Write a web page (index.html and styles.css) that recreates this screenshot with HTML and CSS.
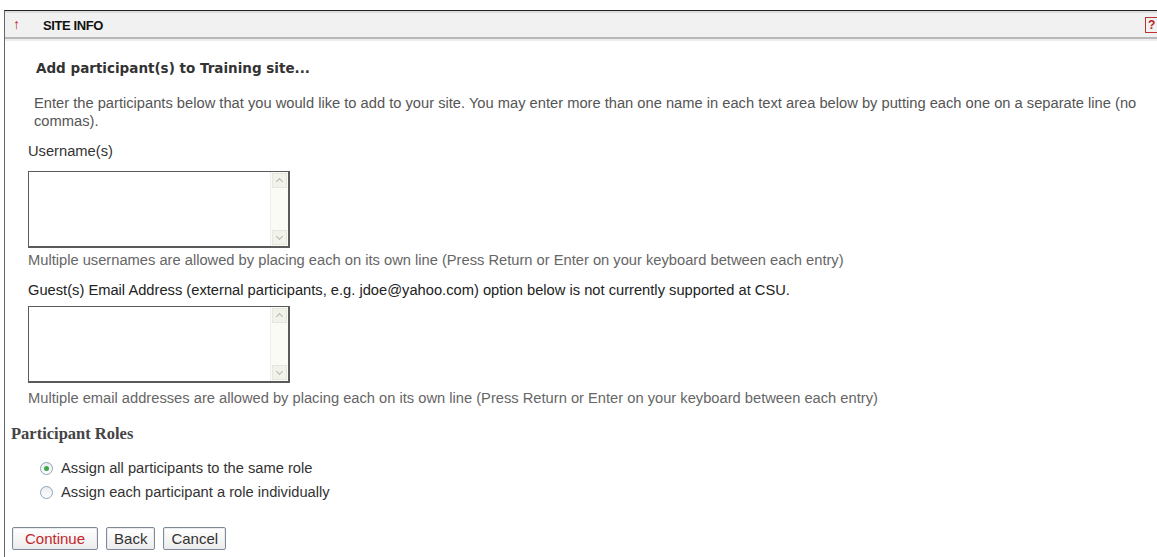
FILE: index.html
```html
<!DOCTYPE html>
<html lang="en">
<head>
<meta charset="utf-8">
<title>Site Info</title>
<link rel="stylesheet" href="styles.css">
</head>
<body>
<div class="portlet">
  <div class="portlet-title">
    <span class="reset-arrow">&#8593;</span>
    <h2>SITE INFO</h2>
    <span class="help-icon">?</span>
  </div>
  <div class="portlet-body">
    <h3 class="page-title">Add participant(s) to Training site...</h3>
    <p class="instruction">Enter the participants below that you would like to add to your site. You may enter more than one name in each text area below by putting each one on a separate line (no commas).</p>

    <div class="field">
      <label class="field-label" for="usernames">Username(s)</label>
      <div class="textbox">
        <textarea id="usernames"></textarea>
        <span class="scroller"><span class="arrow up"></span><span class="arrow down"></span></span>
      </div>
      <div class="field-help">Multiple usernames are allowed by placing each on its own line (Press Return or Enter on your keyboard between each entry)</div>
    </div>

    <div class="field second">
      <label class="field-label dark" for="emails">Guest(s) Email Address (external participants, e.g. jdoe@yahoo.com) option below is not currently supported at CSU.</label>
      <div class="textbox">
        <textarea id="emails"></textarea>
        <span class="scroller"><span class="arrow up"></span><span class="arrow down"></span></span>
      </div>
      <div class="field-help">Multiple email addresses are allowed by placing each on its own line (Press Return or Enter on your keyboard between each entry)</div>
    </div>
  </div>

  <h4 class="roles-title">Participant Roles</h4>
  <div class="roles">
    <label class="role"><span class="radio checked"></span>Assign all participants to the same role</label>
    <label class="role"><span class="radio"></span>Assign each participant a role individually</label>
  </div>

  <div class="actions">
    <button class="btn primary" type="button">Continue</button>
    <button class="btn" type="button">Back</button>
    <button class="btn" type="button">Cancel</button>
  </div>
</div>
</body>
</html>
```

FILE: styles.css
```css
html, body {
  margin: 0;
  padding: 0;
  background: #fff;
}

body {
  padding: 10px 0 0 4px;
  font-family: "Liberation Sans", Arial, sans-serif;
  font-size: 14.7px;
  color: #555;
}

.portlet {
  border-top: 1px solid #222;
  border-left: 1px solid #666;
  min-height: 546px;
}

/* title bar */
.portlet-title {
  display: flex;
  align-items: center;
  height: 24px;
  background: #f1f1f1;
  border-top: 2px solid #dcdcdc;
  border-bottom: 2px solid #b8b8b8;
  box-shadow: 0 2px 0 #ededed;
}

.reset-arrow {
  width: 27px;
  padding-left: 8px;
  color: #c41a1a;
  font-weight: bold;
  font-size: 14px;
  line-height: 1;
  margin-top: -3px;
}

.portlet-title h2 {
  flex: 1;
  margin: 0 0 0 3px;
  font-size: 13px;
  font-weight: bold;
  letter-spacing: -0.4px;
  color: #111;
}

.help-icon {
  width: 9px;
  height: 14px;
  border: 1px solid #b33;
  border-right: none;
  color: #b22;
  font-size: 12px;
  font-weight: bold;
  line-height: 14px;
  padding-left: 2px;
  overflow: hidden;
}

/* form body */
.portlet-body {
  padding: 0 0 0 23px;
}

.page-title {
  margin: 21px 0 0 8px;
  font-family: "DejaVu Sans", Verdana, sans-serif;
  font-size: 13.5px;
  font-weight: bold;
  color: #333;
  line-height: 17px;
}

.instruction {
  margin: 17px 0 0 6px;
  line-height: 18px;
  color: #555;
}

.field {
  margin-top: 12px;
}

.field.second {
  margin-top: 12px;
}

.field-label {
  display: block;
  color: #333;
  line-height: 18px;
}

.field-label.dark {
  color: #222;
}

.textbox {
  position: relative;
  width: 262px;
  height: 77px;
  margin-top: 11px;
}

.field.second .textbox {
  margin-top: 7px;
}

.textbox textarea {
  display: block;
  box-sizing: border-box;
  width: 100%;
  height: 100%;
  margin: 0;
  padding: 2px;
  border: 1px solid #5a5a5a;
  border-right-width: 2px;
  border-bottom-width: 2px;
  resize: none;
  background: #fff;
  font: inherit;
  outline: none;
}

.scroller {
  position: absolute;
  top: 1px;
  right: 2px;
  bottom: 2px;
  width: 17px;
  background: #fbfbf6;
  border-left: 1px solid #f0f0e8;
  pointer-events: none;
}

.arrow {
  position: absolute;
  left: 1px;
  width: 15px;
  height: 15px;
  background: #f1f2ea;
  border: 1px solid #e6e6de;
  box-sizing: border-box;
}

.arrow.up { top: 1px; }
.arrow.down { bottom: 1px; }

.arrow::after {
  content: "";
  position: absolute;
  left: 4px;
  width: 4px;
  height: 4px;
  border-left: 1px solid #b5b8ad;
  border-top: 1px solid #b5b8ad;
}

.arrow.up::after {
  top: 5px;
  transform: rotate(45deg);
}

.arrow.down::after {
  top: 3px;
  transform: rotate(-135deg);
}

.field-help {
  margin-top: 3px;
  color: #666;
  line-height: 18px;
}

.field.second .field-help {
  margin-top: 6px;
}

/* roles */
.roles-title {
  margin: 18px 0 0 6px;
  font-family: "Liberation Serif", "Times New Roman", serif;
  font-size: 16.5px;
  font-weight: bold;
  color: #444;
  line-height: 18px;
}

.roles {
  margin: 16px 0 0 35px;
  display: flex;
  flex-direction: column;
  gap: 6px;
}

.role {
  display: flex;
  align-items: center;
  color: #333;
  line-height: 18px;
}

.radio {
  position: relative;
  box-sizing: border-box;
  width: 13px;
  height: 13px;
  margin-right: 8px;
  border: 1px solid #8fa3b8;
  border-radius: 50%;
  background: linear-gradient(#e9edf1, #fff);
}

.radio.checked::after {
  content: "";
  position: absolute;
  left: 3px;
  top: 3px;
  width: 5px;
  height: 5px;
  border-radius: 50%;
  background: #3fa64a;
}

/* buttons */
.actions {
  display: flex;
  gap: 8px;
  margin: 26px 0 0 7px;
}

.btn {
  height: 23px;
  padding: 0 7px;
  border: 1px solid #7f8a96;
  border-radius: 2px;
  background: linear-gradient(#ffffff, #ececec);
  box-shadow: inset 0 0 0 1px #e8ecf0;
  font-family: "Liberation Sans", Arial, sans-serif;
  font-size: 15px;
  color: #333;
}

.btn.primary {
  color: #c4262b;
  padding: 0 12px;
}
```
